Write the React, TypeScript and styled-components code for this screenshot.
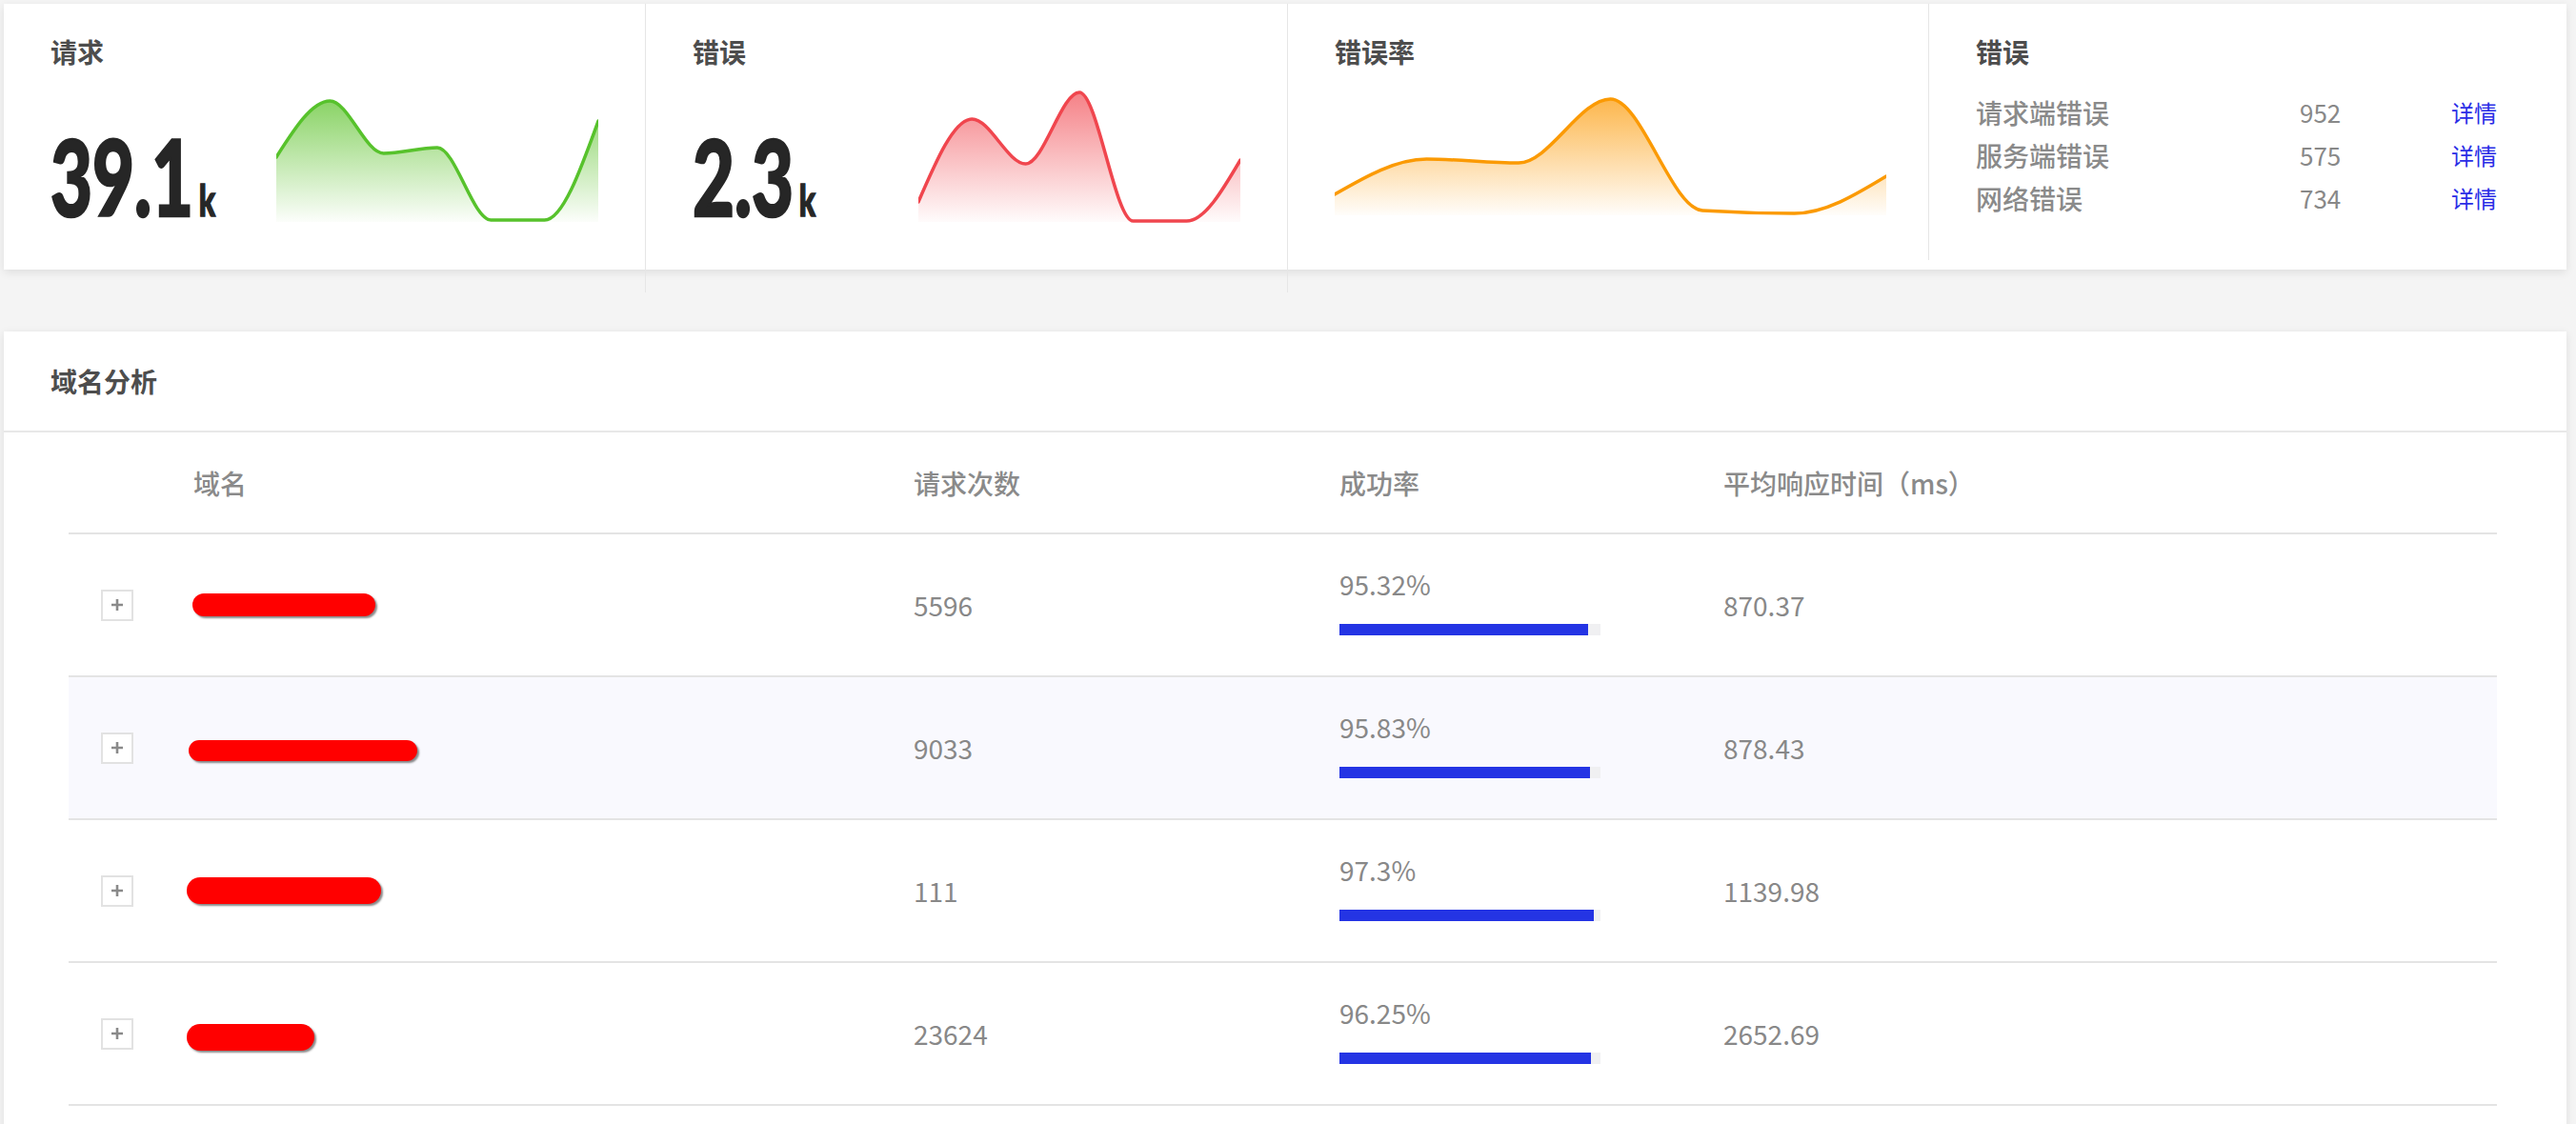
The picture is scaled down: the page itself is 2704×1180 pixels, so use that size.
import React from "react";
import styled, { createGlobalStyle } from "styled-components";

const GlobalStyle = createGlobalStyle`
  html, body {
    margin: 0;
    padding: 0;
    height: 100%;
    overflow: hidden;
    background: #f4f4f4;
  }
  body {
    font-family: "Noto Sans CJK SC", "Noto Sans", sans-serif;
    color: #888;
  }
  * { box-sizing: border-box; }
`;

const Page = styled.div`
  display: flex;
  flex-direction: column;
  gap: 65px;
  padding: 4px 10px 40px 4px;
`;

const StatCard = styled.section`
  display: grid;
  grid-template-columns: repeat(4, 1fr);
  height: 279px;
  background: #fff;
  box-shadow: 0 3px 9px rgba(0, 0, 0, 0.09);
`;

const StatColumn = styled.div<{ $divider?: "long" | "short" | "none"; $padRight?: number }>`
  align-self: start;
  height: ${(p) => (p.$divider === "long" ? 303 : p.$divider === "short" ? 269 : 279)}px;
  padding: 30px ${(p) => p.$padRight ?? 49}px 0 49px;
  border-right: ${(p) => (p.$divider && p.$divider !== "none" ? "1.5px solid #e6e6e6" : "none")};
  display: flex;
  flex-direction: column;
`;

const StatTitle = styled.h3`
  margin: 0;
  font-size: 28px;
  line-height: 40px;
  font-weight: 700;
  color: #4d4d4d;
`;

const StatRow = styled.div`
  display: flex;
  margin-top: 11px;
  height: 150px;
`;

const NumberBlock = styled.div`
  width: 237px;
  flex: none;
  display: flex;
  align-items: flex-end;
`;

const BigNumber = styled.div`
  display: inline-flex;
  align-items: baseline;
  white-space: nowrap;
  font-family: "Lato", "Liberation Sans", sans-serif;
  font-weight: 900;
  font-size: 110px;
  line-height: 1;
  color: #262626;
  -webkit-text-stroke: 2.5px #262626;
  transform: scaleX(0.69);
  transform-origin: left bottom;
  margin-bottom: -4px;
`;

const Unit = styled.span`
  font-size: 46px;
  margin-left: 8px;
  -webkit-text-stroke: 1.5px #262626;
`;

const ChartBox = styled.div<{ $grow?: boolean }>`
  flex: ${(p) => (p.$grow ? 1 : "none")};
  margin-top: ${(p) => (p.$grow ? 0 : 11)}px;
  height: 150px;
  display: flex;
`;

const ErrorList = styled.div`
  display: grid;
  grid-template-columns: 340px 159px auto;
  grid-auto-rows: 45px;
  align-items: center;
  margin-top: 21px;
`;

const ErrLabel = styled.span`
  font-size: 28px;
  color: #8a8a8a;
  font-weight: 500;
`;

const ErrCount = styled.span`
  font-size: 26px;
  color: #888;
`;

const DetailLink = styled.a`
  font-size: 24px;
  color: #2a2de6;
  text-decoration: none;
  cursor: pointer;
`;

const DomainCard = styled.section`
  background: #fff;
  box-shadow: 0 2px 9px rgba(0, 0, 0, 0.09);
  padding-bottom: 60px;
`;

const CardHeader = styled.header`
  height: 106px;
  display: flex;
  align-items: center;
  padding-left: 49px;
  border-bottom: 2px solid #e8e8e8;
`;

const CardTitle = styled.h2`
  margin: 0;
  font-size: 28px;
  font-weight: 700;
  color: #4d4d4d;
`;

const Table = styled.div`
  margin: 0 73px 0 68px;
`;

const GRID = "131px 756px 447px 403px 1fr";

const HeadRow = styled.div`
  display: grid;
  grid-template-columns: ${GRID};
  align-items: center;
  height: 107px;
  border-bottom: 2px solid #e4e4e4;
`;

const HeadCell = styled.div`
  font-size: 28px;
  font-weight: 500;
  color: #8a8a8a;
`;

const BodyRow = styled.div<{ $shade?: boolean }>`
  display: grid;
  grid-template-columns: ${GRID};
  align-items: center;
  height: 150px;
  border-bottom: 2px solid #e4e4e4;
  background: ${(p) => (p.$shade ? "#f9f9fe" : "#fff")};
`;

const ExpandCell = styled.div`
  padding-left: 34px;
  display: flex;
  align-items: center;
`;

const ExpandBox = styled.span`
  width: 34px;
  height: 33px;
  border: 2px solid #e2e2e2;
  background: #fff;
  display: flex;
  align-items: center;
  justify-content: center;
  color: #888;
`;

const PlusIcon = styled.svg`
  width: 16px;
  height: 16px;
  display: block;
`;

const DomainCell = styled.div`
  display: flex;
  align-items: center;
`;

const Redaction = styled.span<{ $w: number; $h: number; $dx: number; $dy: number }>`
  display: block;
  width: ${(p) => p.$w}px;
  height: ${(p) => p.$h}px;
  margin: ${(p) => p.$dy}px 0 0 ${(p) => p.$dx}px;
  border-radius: ${(p) => p.$h / 2}px;
  background: #ff0000;
  box-shadow: 2px 2px 2px rgba(40, 40, 40, 0.55);
`;

const ValueCell = styled.div`
  font-size: 28px;
  line-height: 36px;
  color: #888;
`;

const RateCell = styled.div`
  display: flex;
  flex-direction: column;
  padding-bottom: 8px;
`;

const RateText = styled.span`
  font-size: 28px;
  line-height: 36px;
  color: #888;
`;

const Track = styled.div`
  margin-top: 24px;
  width: 274px;
  height: 12px;
  background: #f0f0f2;
`;

const Fill = styled.div`
  height: 100%;
  background: #2434e4;
`;

function monotonePath(xs: number[], ys: number[]): string {
  const n = xs.length;
  const h: number[] = [];
  const s: number[] = [];
  for (let i = 0; i < n - 1; i++) {
    h[i] = xs[i + 1] - xs[i];
    s[i] = (ys[i + 1] - ys[i]) / h[i];
  }
  const t: number[] = new Array(n).fill(0);
  for (let i = 1; i < n - 1; i++) {
    const s0 = s[i - 1];
    const s1 = s[i];
    const p = (s0 * h[i] + s1 * h[i - 1]) / (h[i - 1] + h[i]);
    t[i] = (Math.sign(s0) + Math.sign(s1)) * Math.min(Math.abs(s0), Math.abs(s1), 0.5 * Math.abs(p)) || 0;
  }
  t[0] = (3 * s[0] - t[1]) / 2;
  t[n - 1] = (3 * s[n - 2] - t[n - 2]) / 2;
  let d = `M${xs[0]},${ys[0]}`;
  for (let i = 0; i < n - 1; i++) {
    const dx = h[i] / 3;
    d += ` C${xs[i] + dx},${ys[i] + t[i] * dx} ${xs[i + 1] - dx},${ys[i + 1] - t[i + 1] * dx} ${xs[i + 1]},${ys[i + 1]}`;
  }
  return d;
}

type SparkProps = { id: string; width: number; values: number[]; base: number; stroke: string; fill: string; opacity: number };

function Sparkline({ id, width, values, base, stroke, fill, opacity }: SparkProps) {
  const n = values.length;
  const xs = values.map((_, i) => (i * width) / (n - 1));
  const line = monotonePath(xs, values);
  const area = `${line} L${width},${base} L0,${base} Z`;
  const top = Math.min(...values);
  return (
    <svg width={width} height={150} viewBox={`0 0 ${width} 150`}>
      <defs>
        <linearGradient id={id} gradientUnits="userSpaceOnUse" x1="0" y1={top} x2="0" y2={base}>
          <stop offset="0" stopColor={fill} stopOpacity={opacity} />
          <stop offset="1" stopColor={fill} stopOpacity={0.02} />
        </linearGradient>
      </defs>
      <path d={area} fill={`url(#${id})`} />
      <path d={line} fill="none" stroke={stroke} strokeWidth={3.5} strokeLinejoin="round" strokeLinecap="round" />
    </svg>
  );
}

const errors = [
  { label: "请求端错误", count: 952 },
  { label: "服务端错误", count: 575 },
  { label: "网络错误", count: 734 },
];

const rows = [
  { w: 192, h: 24, dx: -1, dy: 0, count: "5596", rate: 95.32, rateText: "95.32%", avg: "870.37" },
  { w: 240, h: 22, dx: -5, dy: 6, count: "9033", rate: 95.83, rateText: "95.83%", avg: "878.43" },
  { w: 204, h: 28, dx: -7, dy: 0, count: "111", rate: 97.3, rateText: "97.3%", avg: "1139.98" },
  { w: 134, h: 28, dx: -7, dy: 8, count: "23624", rate: 96.25, rateText: "96.25%", avg: "2652.69" },
];

export default function App() {
  return (
    <>
      <GlobalStyle />
      <Page>
        <StatCard>
          <StatColumn $divider="long">
            <StatTitle>请求</StatTitle>
            <StatRow>
              <NumberBlock>
                <BigNumber>
                  39.1<Unit>k</Unit>
                </BigNumber>
              </NumberBlock>
              <ChartBox $grow>
                <Sparkline
                  id="g-green"
                  width={338}
                  values={[80, 21, 76, 70, 146, 146, 42]}
                  base={148}
                  stroke="#57c22c"
                  fill="#5cc22a"
                  opacity={0.72}
                />
              </ChartBox>
            </StatRow>
          </StatColumn>
          <StatColumn $divider="long">
            <StatTitle>错误</StatTitle>
            <StatRow>
              <NumberBlock>
                <BigNumber>
                  2.3<Unit>k</Unit>
                </BigNumber>
              </NumberBlock>
              <ChartBox $grow>
                <Sparkline
                  id="g-red"
                  width={338}
                  values={[127, 40, 87, 12, 147, 147, 83]}
                  base={148}
                  stroke="#f0464e"
                  fill="#f0464e"
                  opacity={0.68}
                />
              </ChartBox>
            </StatRow>
          </StatColumn>
          <StatColumn $divider="short" $padRight={44}>
            <StatTitle>错误率</StatTitle>
            <ChartBox>
              <Sparkline
                id="g-orange"
                width={579}
                values={[119, 82, 86, 19, 136, 139, 100]}
                base={141}
                stroke="#fb9a04"
                fill="#fca21a"
                opacity={0.78}
              />
            </ChartBox>
          </StatColumn>
          <StatColumn $divider="none">
            <StatTitle>错误</StatTitle>
            <ErrorList>
              {errors.map((e) => (
                <React.Fragment key={e.label}>
                  <ErrLabel>{e.label}</ErrLabel>
                  <ErrCount>{e.count}</ErrCount>
                  <DetailLink>详情</DetailLink>
                </React.Fragment>
              ))}
            </ErrorList>
          </StatColumn>
        </StatCard>

        <DomainCard>
          <CardHeader>
            <CardTitle>域名分析</CardTitle>
          </CardHeader>
          <Table>
            <HeadRow>
              <HeadCell />
              <HeadCell>域名</HeadCell>
              <HeadCell>请求次数</HeadCell>
              <HeadCell>成功率</HeadCell>
              <HeadCell>平均响应时间（ms）</HeadCell>
            </HeadRow>
            {rows.map((r, i) => (
              <BodyRow key={i} $shade={i === 1}>
                <ExpandCell>
                  <ExpandBox>
                    <PlusIcon viewBox="0 0 16 16">
                      <path d="M8 2v12M2 8h12" stroke="#8a8a8a" strokeWidth={2.6} />
                    </PlusIcon>
                  </ExpandBox>
                </ExpandCell>
                <DomainCell>
                  <Redaction $w={r.w} $h={r.h} $dx={r.dx} $dy={r.dy} />
                </DomainCell>
                <ValueCell>{r.count}</ValueCell>
                <RateCell>
                  <RateText>{r.rateText}</RateText>
                  <Track>
                    <Fill style={{ width: `${r.rate}%` }} />
                  </Track>
                </RateCell>
                <ValueCell>{r.avg}</ValueCell>
              </BodyRow>
            ))}
          </Table>
        </DomainCard>
      </Page>
    </>
  );
}
